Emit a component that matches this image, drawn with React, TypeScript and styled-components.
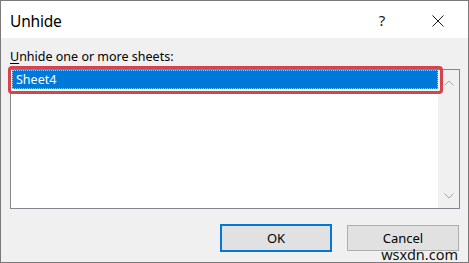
import { createGlobalStyle, styled } from 'styled-components';

const GlobalStyle = createGlobalStyle`
  html, body {
    margin: 0;
    padding: 0;
    background: #ffffff;
  }
  * {
    box-sizing: border-box;
  }
`;

const sheets = ['Sheet4'];

export default function App() {
  return (
    <>
      <GlobalStyle />
      <Window>
        <TitleBar>
          <Title>Unhide</Title>
          <TitleButtons>
            <HelpButton>?</HelpButton>
            <CloseButton>
              <svg width="12" height="12" viewBox="0 0 12 12">
                <path d="M0.5 0.5 L11.5 11.5 M11.5 0.5 L0.5 11.5" stroke="#1a1a1a" strokeWidth="1" fill="none" />
              </svg>
            </CloseButton>
          </TitleButtons>
        </TitleBar>
        <Body>
          <Label>
            <u>U</u>nhide one or more sheets:
          </Label>
          <ListBox>
            <Items>
              {sheets.map((name, idx) => (
                <Item key={name} selected={idx === 0}>
                  {name}
                </Item>
              ))}
            </Items>
            <ScrollBar>
              <Chevron viewBox="0 0 10 6">
                <path d="M0.5 5.5 L5 1 L9.5 5.5" />
              </Chevron>
              <Chevron viewBox="0 0 10 6">
                <path d="M0.5 0.5 L5 5 L9.5 0.5" />
              </Chevron>
            </ScrollBar>
            <Highlight />
          </ListBox>
          <ButtonRow>
            <DialogButton primary>OK</DialogButton>
            <DialogButton>Cancel</DialogButton>
          </ButtonRow>
        </Body>
        <Watermark>wsxdn.com</Watermark>
      </Window>
    </>
  );
}

const Window = styled.div`
  position: relative;
  width: 469px;
  height: 263px;
  border: 1px solid #7a7a7a;
  display: flex;
  flex-direction: column;
  font-family: 'Noto Sans', 'Open Sans', sans-serif;
  color: #000;
  overflow: hidden;
`;

const TitleBar = styled.div`
  height: 37px;
  background: #ffffff;
  display: flex;
  align-items: center;
  justify-content: space-between;
  padding-left: 9px;
`;

const Title = styled.div`
  font-size: 15.5px;
  letter-spacing: -0.2px;
  margin-top: 2px;
`;

const TitleButtons = styled.div`
  display: flex;
  align-items: center;
  height: 100%;
  margin-right: 2px;
`;

const HelpButton = styled.div`
  width: 56px;
  text-align: center;
  font-size: 15px;
  color: #1a1a1a;
  margin-top: 1px;
`;

const CloseButton = styled.div`
  width: 56px;
  height: 100%;
  display: flex;
  align-items: center;
  justify-content: center;
  padding-top: 3px;
`;

const Body = styled.div`
  flex: 1;
  background: #f0f0f0;
  padding: 9px 8px 0 9px;
  display: flex;
  flex-direction: column;
`;

const Label = styled.div`
  font-size: 12.5px;
  line-height: 17px;
  margin-bottom: 4px;
  margin-top: 1px;

  u {
    text-underline-offset: 2px;
  }
`;

const ListBox = styled.div`
  position: relative;
  height: 140px;
  border: 1px solid #828790;
  background: #ffffff;
  display: flex;
`;

const Items = styled.div`
  flex: 1;
  padding-left: 1px;
`;

const Item = styled.div<{ selected?: boolean }>`
  height: 19px;
  line-height: 17px;
  font-size: 12.5px;
  padding-left: 3px;
  color: ${({ selected }) => (selected ? '#ffffff' : '#000000')};
  background: ${({ selected }) => (selected ? '#0078d7' : 'transparent')};
  border: 1px dotted ${({ selected }) => (selected ? '#9cc8f0' : 'transparent')};
`;

const ScrollBar = styled.div`
  width: 21px;
  background: #f0f0f0;
  display: flex;
  flex-direction: column;
  justify-content: space-between;
  align-items: center;
  padding: 10px 0 9px;
`;

const Chevron = styled.svg`
  width: 10px;
  height: 6px;

  path {
    fill: none;
    stroke: #a6a6a6;
    stroke-width: 1;
  }
`;

const Highlight = styled.div`
  position: absolute;
  left: -3px;
  top: -4px;
  width: 435px;
  height: 28px;
  border: 3px solid #d6434c;
  border-radius: 4px;
  pointer-events: none;
`;

const ButtonRow = styled.div`
  display: flex;
  justify-content: flex-end;
  gap: 15px;
  margin-top: 15px;
  padding-right: 1px;
`;

const DialogButton = styled.button<{ primary?: boolean }>`
  width: 112px;
  height: 28px;
  font-family: inherit;
  font-size: 13px;
  color: #000;
  background: #e1e1e1;
  border: ${({ primary }) => (primary ? '2px solid #0078d7' : '1px solid #adadad')};
  ${({ primary }) => (primary ? '' : 'margin-top: 1px; height: 26px;')}
  padding: 0;
`;

const Watermark = styled.div`
  position: absolute;
  right: 10px;
  bottom: 1px;
  font-size: 14.5px;
  line-height: 13px;
  color: #111;
  font-family: 'Noto Sans', sans-serif;
`;
